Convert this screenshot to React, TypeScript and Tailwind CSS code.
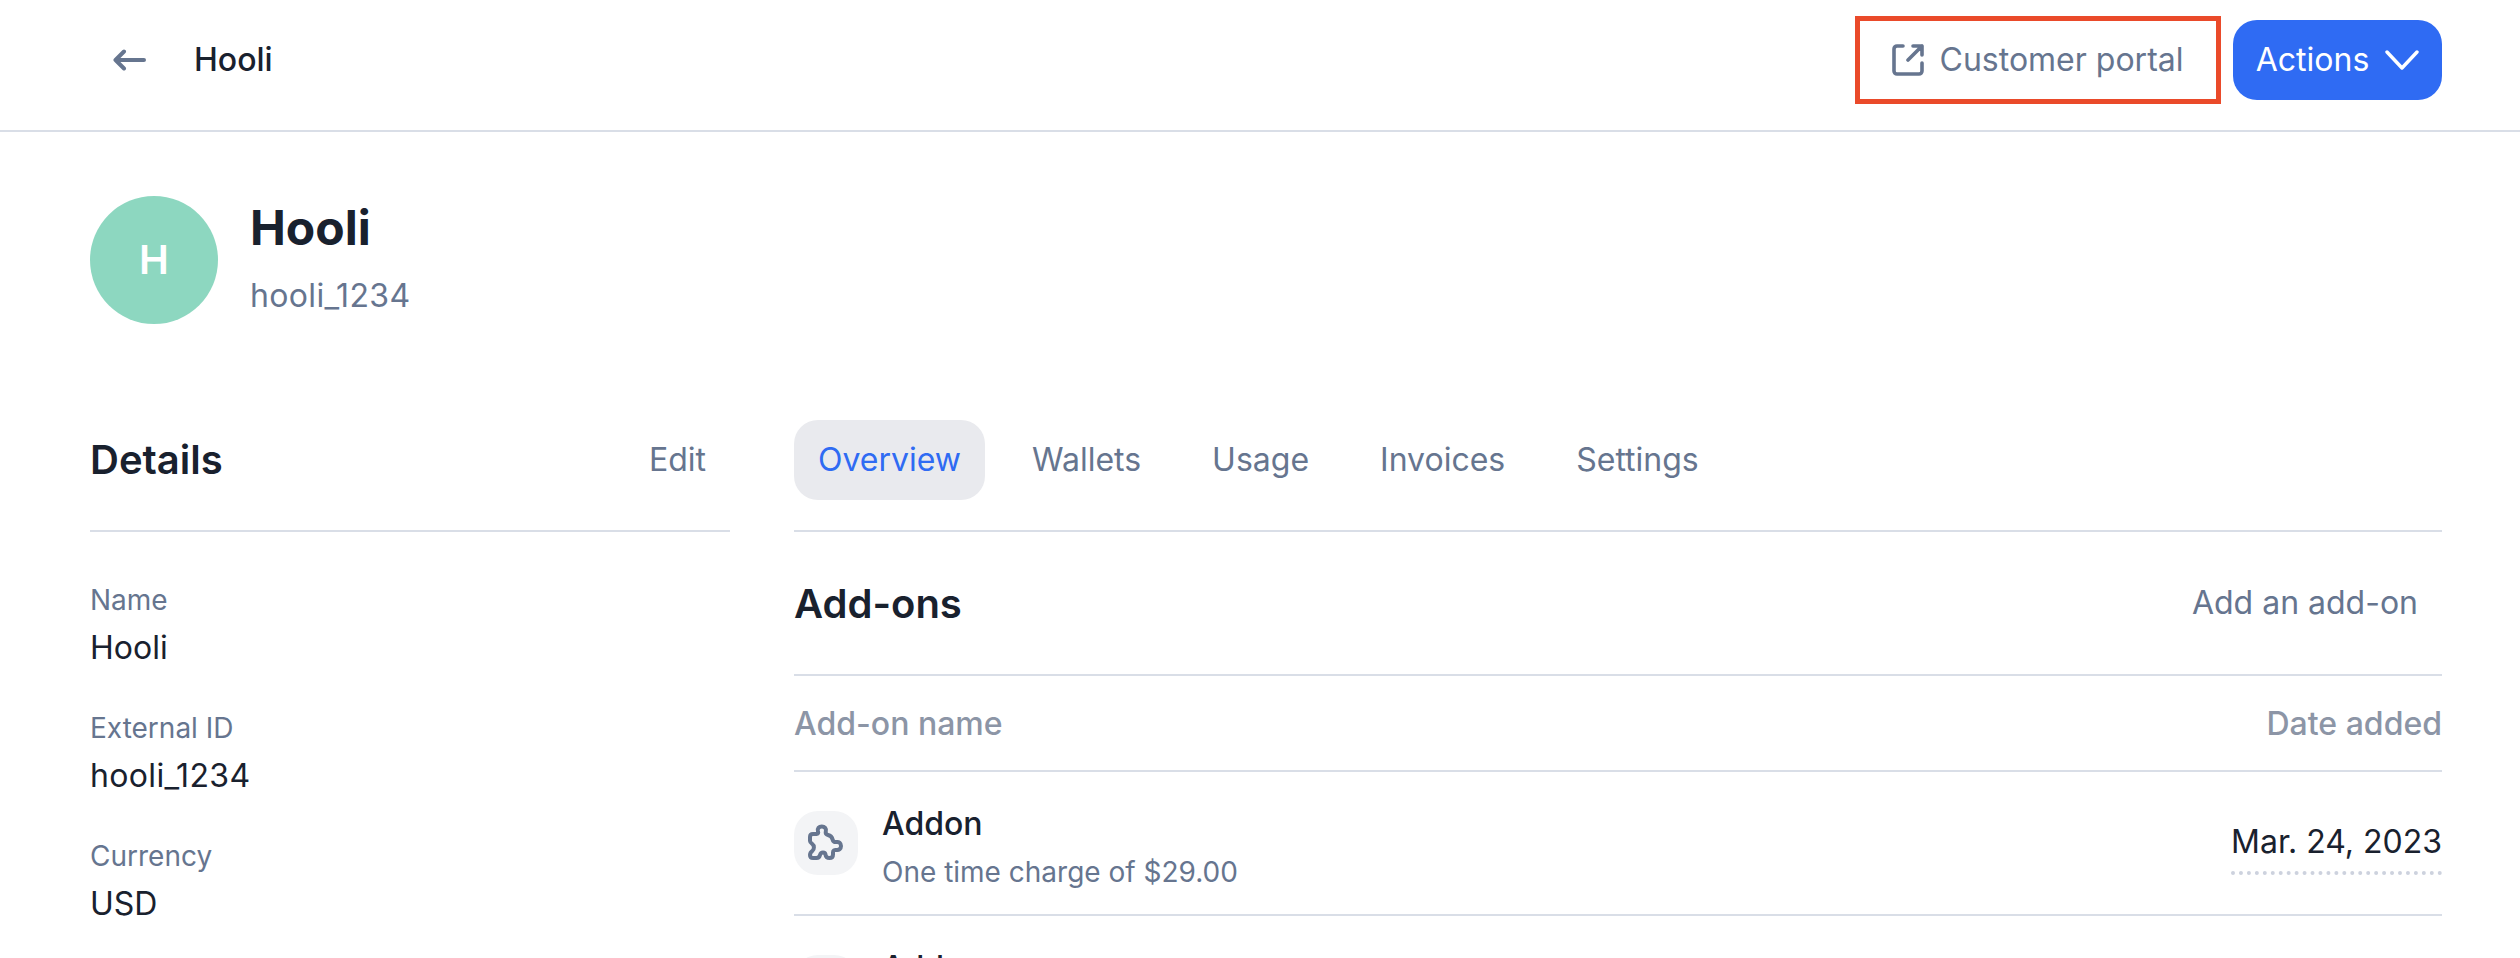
function Field({ label, value, spaced }: { label: string; value: string; spaced?: boolean }) {
  return (
    <div className="flex flex-col">
      <span className="text-[28px] leading-[40px] text-[#66758f]">{label}</span>
      <span className={spaced ? "text-[32px] leading-[56px] tracking-[0.35px] text-[#19212e]" : "text-[32px] leading-[56px] text-[#19212e]"}>{value}</span>
    </div>
  );
}

function PuzzleIcon() {
  return (
    <svg width="52" height="52" viewBox="0 0 52 52" fill="none" stroke="currentColor" strokeWidth="4" strokeLinecap="round" strokeLinejoin="round">
      <path d="M13 17 H16.5 C18 17 18.6 16 18 14.5 C17 11.5 19 9.5 21.8 9.5 C24.6 9.5 26.6 11.5 25.8 14.5 C25.4 16.2 26.4 17.6 28 18 C30.5 18.6 32 20 32.6 22.5 C33 24.4 34.4 25.4 36.2 25 C39 24.4 41 26.4 41 29 C41 31.6 39 33.4 36.4 33 C34.4 32.7 33 33.6 33 35.5 V37.5 C33 40 31.4 41 29.5 41 C27 41 25.8 39.8 25.6 38 C25.4 36.4 24.4 35.6 23 35.6 C21.4 35.6 20.4 36.6 20 38 C19.5 40 18.4 41 16.5 41 H13 C11 41 10 39.8 10 38 C10 36 11 34.8 12.4 33.8 C14.4 32.4 14.4 28.6 12.4 27.2 C11 26.2 10 25.4 10 24 V20 C10 18 11 17 13 17 Z" />
    </svg>
  );
}

function AddonRow() {
  return (
    <div className="flex h-[144px] shrink-0 items-center justify-between border-b-2 border-[#d9dee7]">
      <div className="flex items-center gap-6">
        <div className="flex h-16 w-16 items-center justify-center rounded-3xl bg-[#f3f4f6] text-[#66758f]">
          <PuzzleIcon />
        </div>
        <div className="flex flex-col pt-[9px]">
          <span className="text-[32px] leading-[48px] font-medium text-[#19212e]">Addon</span>
          <span className="text-[28px] leading-[48px] text-[#66758f]">One time charge of $29.00</span>
        </div>
      </div>
      <span className="mt-[6px] border-b-4 border-dotted border-[#cdd2de] pb-[5px] text-[32px] leading-[48px] text-[#19212e]">
        Mar. 24, 2023
      </span>
    </div>
  );
}

export default function App() {
  const tabs = ["Wallets", "Usage", "Invoices", "Settings"];
  return (
    <div className="h-[958px] w-[2520px] overflow-hidden bg-white font-[Inter,sans-serif]">
      <header className="flex h-[132px] items-center justify-between border-b-2 border-[#d9dee7] pr-[78px] pb-[10px] pl-[113px]">
        <div className="flex items-center gap-[48px]">
          <svg width="33" height="22" viewBox="0 0 33 22" fill="none" stroke="#66758f" strokeWidth="4" strokeLinecap="round" strokeLinejoin="round">
            <path d="M31 11H2.5M11 2.5L2.5 11L11 19.5" />
          </svg>
          <span className="text-[32px] leading-[48px] font-medium text-[#19212e]">Hooli</span>
        </div>
        <div className="flex items-center gap-3">
          <button className="flex h-[88px] w-[366px] items-center justify-center gap-[16px] border-[5px] border-[#ea4a2a] pr-[1px] text-[32px] font-normal text-[#66758f]">
            <svg width="32" height="32" viewBox="0 0 32 32" fill="none" stroke="currentColor" strokeWidth="3.6" strokeLinecap="round" strokeLinejoin="round">
              <path d="M11 2H5A3 3 0 0 0 2 5V27A3 3 0 0 0 5 30H27A3 3 0 0 0 30 27V19M16 16L30 2M21 2H30V11" />
            </svg>
            Customer portal
          </button>
          <button className="flex h-20 w-[209px] items-center justify-center gap-[16px] rounded-3xl bg-[#2f6bf3] text-[32px] font-normal text-white">
            Actions
            <svg width="34" height="20" viewBox="0 0 34 20" fill="none" stroke="currentColor" strokeWidth="3.4" strokeLinecap="round" strokeLinejoin="round">
              <path d="M2 2L17 18L32 2" />
            </svg>
          </button>
        </div>
      </header>

      <main className="pr-[78px] pl-[90px]">
        <div className="flex items-start gap-8 pt-16">
          <div className="flex h-32 w-32 items-center justify-center rounded-full bg-[#8dd7c0] text-[40px] font-semibold text-white">
            H
          </div>
          <div className="flex flex-col gap-3">
            <h1 className="text-[48px] leading-[64px] font-bold text-[#19212e]">Hooli</h1>
            <span className="text-[32px] leading-[48px] tracking-[0.35px] text-[#66758f]">hooli_1234</span>
          </div>
        </div>

        <div className="mt-24 flex gap-16">
          <aside className="flex w-[640px] shrink-0 flex-col">
            <div className="flex h-[112px] items-start justify-between border-b-2 border-[#d9dee7]">
              <h2 className="text-[40px] leading-[80px] font-semibold text-[#19212e]">Details</h2>
              <span className="px-6 text-[32px] leading-[80px] font-normal text-[#66758f]">Edit</span>
            </div>
            <div className="flex flex-col gap-8 pt-12">
              <Field label="Name" value="Hooli" />
              <Field label="External ID" value="hooli_1234" spaced />
              <Field label="Currency" value="USD" />
            </div>
          </aside>

          <section className="flex min-w-0 flex-1 flex-col">
            <nav className="flex h-[112px] shrink-0 items-start gap-[23px] border-b-2 border-[#d9dee7]">
              <span className="flex h-20 items-center rounded-3xl bg-[#e9eaee] px-6 text-[32px] font-normal text-[#2f6bf3]">
                Overview
              </span>
              {tabs.map((t) => (
                <span key={t} className="flex h-20 items-center px-6 text-[32px] font-normal text-[#66758f]">
                  {t}
                </span>
              ))}
            </nav>
            <div className="flex h-[144px] shrink-0 items-center justify-between border-b-2 border-[#d9dee7]">
              <h2 className="pt-[2px] text-[40px] leading-[56px] font-semibold text-[#19212e]">Add-ons</h2>
              <span className="px-6 text-[32px] font-normal text-[#66758f]">Add an add-on</span>
            </div>
            <div className="flex h-[96px] shrink-0 items-center justify-between border-b-2 border-[#d9dee7] pt-[2px] text-[32px] font-[550] text-[#8c95a6]">
              <span>Add-on name</span>
              <span>Date added</span>
            </div>
            <AddonRow />
            <AddonRow />
          </section>
        </div>
      </main>
    </div>
  );
}
